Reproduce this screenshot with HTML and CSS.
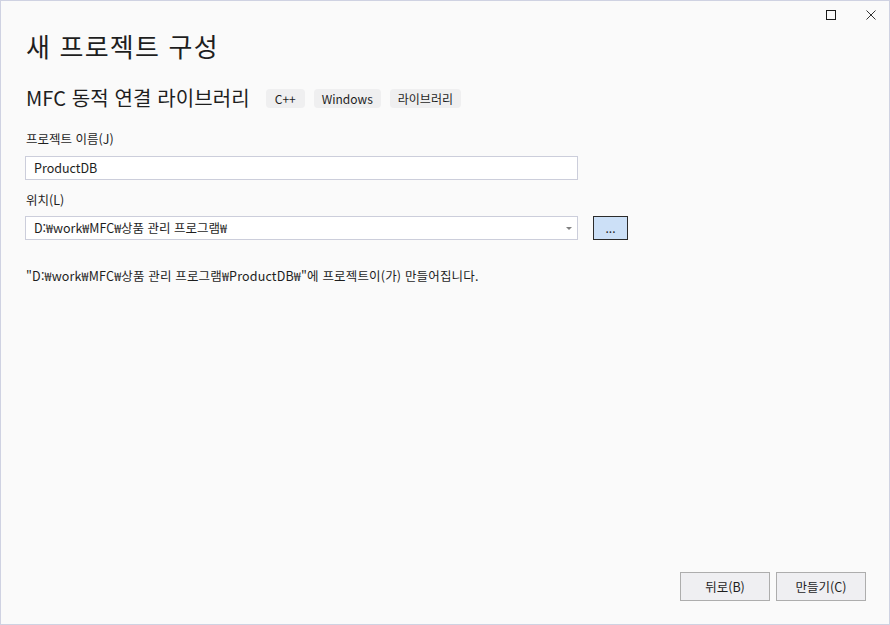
FILE: index.html
```html
<!DOCTYPE html>
<html lang="ko">
<head>
<meta charset="utf-8">
<title>새 프로젝트 구성</title>
<link rel="stylesheet" href="styles.css">
</head>
<body>
<div class="window">
  <div class="titlebar">
    <svg class="cap-icon" width="10" height="10" viewBox="0 0 10 10"><rect x="0.5" y="0.5" width="9" height="9" fill="none" stroke="#1a1a1a" stroke-width="1"/></svg>
    <svg class="cap-icon" width="10" height="10" viewBox="0 0 10 10"><path d="M0.5 0.5 L9.5 9.5 M9.5 0.5 L0.5 9.5" stroke="#333" stroke-width="1" fill="none"/></svg>
  </div>
  <div class="content">
    <h1 class="title">새 프로젝트 구성</h1>
    <div class="subtitle-row">
      <span class="subtitle">MFC 동적 연결 라이브러리</span>
      <span class="tags">
        <span class="tag tag-cpp">C++</span>
        <span class="tag">Windows</span>
        <span class="tag">라이브러리</span>
      </span>
    </div>
    <div class="label label-name">프로젝트 이름(J)</div>
    <div class="field">ProductDB</div>
    <div class="label label-loc">위치(L)</div>
    <div class="loc-row">
      <div class="field select">D:₩work₩MFC₩상품 관리 프로그램₩<span class="arrow"></span></div>
      <div class="browse">...</div>
    </div>
    <div class="message">"D:₩work₩MFC₩상품 관리 프로그램₩ProductDB₩"에 프로젝트이(가) 만들어집니다.</div>
  </div>
  <div class="footer">
    <div class="btn">뒤로(B)</div>
    <div class="btn">만들기(C)</div>
  </div>
</div>
</body>
</html>
```
FILE: styles.css
```css
html, body {
  margin: 0;
  padding: 0;
}
body {
  font-family: "Noto Sans CJK KR", "Noto Sans", sans-serif;
  color: #1e1e1e;
  background: #fafafa;
}
.window {
  width: 890px;
  height: 625px;
  box-sizing: border-box;
  border: 1px solid #cfd2e2;
  background: #fafafa;
  display: flex;
  flex-direction: column;
}
.titlebar {
  height: 29px;
  display: flex;
  justify-content: flex-end;
  align-items: flex-start;
  gap: 30px;
  padding: 9px 13px 0 0;
  box-sizing: border-box;
}
.cap-icon {
  display: block;
}
.content {
  flex: 1;
  padding: 0 24px;
}
.title {
  margin: 0;
  font-weight: 400;
  font-size: 26px;
  line-height: 32px;
  height: 32px;
  letter-spacing: 1.2px;
  padding-left: 1px;
}
.subtitle-row {
  margin-top: 22px;
  height: 28px;
  display: flex;
  align-items: center;
  padding-left: 1px;
}
.subtitle {
  font-size: 20px;
  line-height: 28px;
  letter-spacing: 0.1px;
}
.tags {
  display: flex;
  gap: 9px;
  margin-left: 16px;
}
.tag {
  background: #efeff0;
  border-radius: 4px;
  font-size: 12px;
  line-height: 19px;
  height: 19px;
  padding: 0 8px;
}
.tag-cpp {
  padding: 0 9px;
}
.label {
  font-size: 12.5px;
  line-height: 16px;
  height: 16px;
  padding-left: 1px;
}
.label-name {
  margin-top: 19px;
}
.label-loc {
  margin-top: 12px;
}
.field {
  margin-top: 9px;
  width: 553px;
  height: 24px;
  box-sizing: border-box;
  border: 1px solid #cccedb;
  background: #ffffff;
  font-size: 12.5px;
  line-height: 22px;
  padding-left: 8px;
}
.loc-row {
  margin-top: 8px;
  display: flex;
  gap: 15px;
}
.select {
  margin-top: 0;
  position: relative;
  white-space: nowrap;
}
.arrow {
  position: absolute;
  right: 5px;
  top: 10px;
  width: 0;
  height: 0;
  border-left: 3px solid transparent;
  border-right: 3px solid transparent;
  border-top: 3px solid #808080;
}
.browse {
  width: 35px;
  height: 24px;
  box-sizing: border-box;
  border: 1px solid #2b2b2b;
  background: #cce0f7;
  font-size: 12px;
  line-height: 22px;
  text-align: center;
}
.message {
  margin-top: 28px;
  font-size: 12.5px;
  line-height: 16px;
  letter-spacing: 0.17px;
  padding-left: 1px;
  white-space: nowrap;
}
.footer {
  display: flex;
  justify-content: flex-end;
  gap: 6px;
  padding: 0 23px 23px 0;
}
.btn {
  width: 90px;
  height: 29px;
  box-sizing: border-box;
  border: 1px solid #adadad;
  background: #efeff2;
  font-size: 12.5px;
  line-height: 27px;
  text-align: center;
}
```
